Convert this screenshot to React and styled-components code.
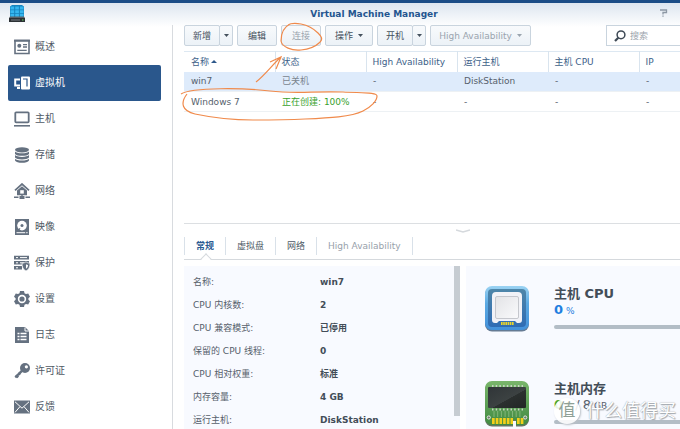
import React from "react";
import styled, { createGlobalStyle, css } from "styled-components";

const Global = createGlobalStyle`
  * { box-sizing: border-box; }
  html, body { margin: 0; height: 100%; overflow: hidden; background: #fff; }
  body, button, input, table {
    font-family: "DejaVu Sans", "Noto Sans CJK SC", sans-serif;
    font-size: 9px;
    line-height: 12px;
    color: #4b5560;
  }
`;

const Window = styled.div`
  position: relative;
  display: flex;
  flex-direction: column;
  height: 100vh;
  overflow: hidden;
  border-top: 3px solid #1b4d87;
  background: linear-gradient(#dde6f0, #fff 24px);
`;

const TitleBar = styled.header`
  display: grid;
  grid-template-columns: 91px 1fr 31px;
  align-items: center;
  flex: 0 0 22px;
  padding-left: 8px;
`;

const Title = styled.h1`
  margin: 0;
  text-align: center;
  font-size: 9px;
  line-height: 20px;
  font-weight: bold;
  color: #24558f;
`;

const HelpButton = styled.button`
  justify-self: end;
  display: flex;
  margin: 0 12px 2px 0;
  padding: 0;
  border: 0;
  background: none;
`;

const Body = styled.div`
  display: flex;
  flex: 1;
  min-height: 0;
`;

const Sidebar = styled.nav`
  display: flex;
  flex-direction: column;
  flex: 0 0 173px;
  padding: 4px 11px 0 8px;
  border-right: 1px solid #d8dbdf;
`;

const NavLink = styled.a`
  display: flex;
  align-items: center;
  gap: 5px;
  flex: 0 0 36px;
  padding-left: 6px;
  border-radius: 2px;
  font-size: 10px;
  text-decoration: none;
  color: ${(p) => (p.$active ? "#fff" : "#4f5a66")};
  background: ${(p) => (p.$active ? "#2a578c" : "transparent")};
`;

const Main = styled.main`
  display: flex;
  flex-direction: column;
  flex: 1;
  min-width: 0;
  padding-left: 11px;
`;

const Toolbar = styled.div`
  display: flex;
  gap: 4px;
  margin-bottom: 5px;
`;

const ButtonGroup = styled.div`
  display: flex;
`;

const Button = styled.button`
  display: flex;
  align-items: center;
  justify-content: center;
  gap: 5px;
  height: 21px;
  width: ${(p) => p.$width}px;
  padding: 0;
  border: 1px solid #c9d4de;
  border-radius: 2px;
  background: linear-gradient(#f8fafc, #ecf2f7);
  color: ${(p) => (p.disabled ? "#9aa4ae" : "#45515d")};
  white-space: nowrap;
  ${(p) => p.$joined && css`margin-left: -1px;`}
`;

const SearchBox = styled.label`
  display: flex;
  align-items: center;
  gap: 4px;
  width: 74px;
  height: 21px;
  margin-left: auto;
  padding-left: 7px;
  border: 1px solid #c9d4de;
  border-right: 0;
  background: #fff;
`;

const SearchInput = styled.input`
  flex: 1;
  min-width: 0;
  padding: 0;
  border: 0;
  outline: 0;
  background: none;
  &::placeholder { color: #9ba4ad; opacity: 1; }
`;

const TableArea = styled.section`
  flex: 0 0 173px;
  border-bottom: 1px solid #dcdfe2;
`;

const Table = styled.table`
  width: 100%;
  table-layout: fixed;
  border-collapse: collapse;
  border-top: 1px solid #dde8f2;
`;

const HeadCell = styled.th`
  width: ${(p) => (p.$last ? "auto" : "91px")};
  height: 20px;
  padding: 0 0 0 ${(p) => (p.$first ? "7px" : "6px")};
  border-left: ${(p) => (p.$first ? "0" : "1px solid #d9e4ee")};
  text-align: left;
  font-weight: normal;
  color: #3d6189;
  white-space: nowrap;
`;

const SortArrow = styled.span`
  display: inline-block;
  margin: 0 0 2px 2px;
  border: 3px solid transparent;
  border-top: 0;
  border-bottom: 3px solid #2d578a;
`;

const Row = styled.tr`
  background: ${(p) => (p.$selected ? "#deebfb" : "#fff")};
  border-bottom: 1px solid #edf1f4;
`;

const Cell = styled.td`
  height: 20px;
  padding: 0 0 0 7px;
  white-space: nowrap;
  color: ${(p) => (p.$tone === "good" ? "#38a12c" : p.$tone === "muted" ? "#7a848e" : "#56616c")};
`;

const Splitter = styled.div`
  display: flex;
  justify-content: center;
  flex: 0 0 13px;
  padding: 5px 0 0 62px;
`;

const SplitterGrip = styled.svg`
  display: block;
`;

const Tabs = styled.div`
  display: flex;
  flex: 0 0 23px;
  border-bottom: 1px solid #d5d9dd;
  margin-bottom: 6px;
`;

const Tab = styled.button`
  position: relative;
  height: 18px;
  padding: 0 11px;
  border: 0;
  border-right: 1px solid #d9e1e9;
  background: none;
  white-space: nowrap;
  font-weight: ${(p) => (p.$active ? "bold" : "normal")};
  color: ${(p) => (p.$active ? "#2b5a92" : p.disabled ? "#98a1ab" : "#4e5a66")};
  &:first-child { border-left: 1px solid #d9e1e9; }
  ${(p) => p.$active && css`
    &::after {
      content: "";
      position: absolute;
      left: calc(50% - 3px);
      bottom: -8px;
      width: 7px;
      height: 7px;
      border: 1px solid #d5d9dd;
      border-right: 0;
      border-bottom: 0;
      background: linear-gradient(135deg, #fff 50%, transparent 50%);
      transform: rotate(45deg);
    }
  `}
`;

const Panels = styled.div`
  display: flex;
  gap: 6px;
  flex: 1;
  min-height: 0;
`;

const InfoPanel = styled.section`
  display: flex;
  justify-content: space-between;
  flex: 0 0 276px;
  overflow: hidden;
  background: #f8faff;
`;

const InfoList = styled.dl`
  display: grid;
  grid-template-columns: 127px 1fr;
  grid-auto-rows: 23px;
  align-items: center;
  margin: 0;
  padding: 4px 0 0 9px;
`;

const InfoLabel = styled.dt`
  color: #56606b;
`;

const InfoValue = styled.dd`
  margin: 0;
  font-weight: bold;
  color: #434d58;
`;

const ScrollThumb = styled.div`
  flex: 0 0 6px;
  height: 150px;
  background: #c6ccd2;
`;

const UsagePanel = styled.section`
  display: flex;
  flex-direction: column;
  gap: 49px;
  flex: 1;
  min-width: 0;
  padding: 20px 0 0 19px;
  overflow: hidden;
  background: #f8faff;
`;

const Usage = styled.article`
  display: flex;
  gap: 25px;
`;

const UsageBody = styled.div`
  flex: 1;
  min-width: 0;
`;

const UsageTitle = styled.h2`
  margin: 0;
  font-size: 13px;
  line-height: 16px;
  font-weight: bold;
  color: #434d58;
`;

const UsageValue = styled.p`
  display: flex;
  align-items: baseline;
  gap: 3px;
  margin: 0;
  font-size: 13px;
  line-height: 16px;
  color: #56606b;
`;

const Amount = styled.strong`
  color: ${(p) => p.$color};
`;

const Unit = styled.span`
  font-size: 9px;
  color: ${(p) => p.$color};
`;

const Meter = styled.div`
  height: 4px;
  margin-top: 6px;
  border-radius: 2px 0 0 2px;
  background: #b3bdc6;
`;

const Watermark = styled.div`
  position: absolute;
  right: 4px;
  bottom: 5px;
  display: flex;
  align-items: center;
  gap: 6px;
  font-size: 18px;
  line-height: 26px;
  color: #fff;
  text-shadow: 0 0 1px #8c939a, 1px 1px 1px #a0a6ac;
`;

const WatermarkSeal = styled.span`
  width: 26px;
  height: 26px;
  border-radius: 50%;
  text-align: center;
  font-size: 17px;
  line-height: 25px;
  color: #8fa096;
  text-shadow: none;
  background: rgba(255, 255, 255, 0.88);
  box-shadow: 1px 1px 2px #b9bfc6;
`;

const Annotation = styled.svg`
  position: absolute;
  left: 0;
  top: -3px;
  pointer-events: none;
`;

const Glyph = styled.svg`
  flex: none;
  display: block;
`;

const G = "#657180";

const icons = {
  overview: (
    <>
      <path d="M1 1.5h14v13H1z" fill="none" stroke={G} strokeWidth="1.6" />
      <path d="M0 .7h16v2H0z" fill={G} />
      <circle cx="5.3" cy="6.8" r="2" fill={G} />
      <path d="M9 5.7h4M9 8h4M3.3 11.3h9.4" stroke={G} strokeWidth="1.3" />
    </>
  ),
  vm: (
    <>
      <path d="M6 4.6H1.2v6H6M3 13h3" fill="none" stroke="#fff" strokeWidth="2" />
      <path d="M8 1.500h7a1 1 0 0 1 1 1v11a1 1 0 0 1-1 1H8a1 1 0 0 1-1-1v-11a1 1 0 0 1 1-1z" fill="#fff" />
      <path d="M9 4h4v7.500" fill="none" stroke="#2a578c" strokeWidth="1.200" />
    </>
  ),
  host: (
    <>
      <rect x="1.3" y="1.3" width="13.4" height="10" rx=".8" fill="none" stroke={G} strokeWidth="1.8" />
      <path d="M0 14.8h16" stroke={G} strokeWidth="1.6" />
    </>
  ),
  storage: (
    <>
      <ellipse cx="8" cy="2.8" rx="7" ry="2.6" fill={G} />
      <path d="M1 4.5c1.5 2.4 12.5 2.4 14 0v2.4c-1.5 2.6-12.5 2.6-14 0zM1 8.1c1.5 2.4 12.5 2.4 14 0v2.4c-1.5 2.6-12.5 2.6-14 0zM1 11.7c1.5 2.4 12.5 2.4 14 0v1.7c-1.5 3.2-12.5 3.2-14 0z" fill={G} />
    </>
  ),
  network: (
    <>
      <path d="M1 7.4 8 1l7 6.4" fill="none" stroke={G} strokeWidth="1.7" />
      <path d="M3 7.6 8 3.3l5 4.3v4.6H3z" fill={G} />
      <path d="M6.2 7.2h3.6v3.4H6.2z" fill="#fff" />
      <path d="M8 11v3M0 14.3h4.5M11.5 14.3H16" stroke={G} strokeWidth="1.4" />
      <path d="M5.5 13h5v3h-5z" fill={G} />
    </>
  ),
  image: (
    <>
      <path d="M1 0h14v16H1z" fill={G} />
      <circle cx="8" cy="6.6" r="4.8" fill="#fff" />
      <circle cx="8" cy="6.6" r="1.5" fill={G} />
      <path d="M4.500 11 6 9.300" stroke={G} strokeWidth="1.2" />
      <path d="M2.5 13.7h8.7M12.2 13.7h1.4" stroke="#fff" strokeWidth="1" />
    </>
  ),
  protect: (
    <>
      <path d="M0 .8h15v3.7H0zM0 6h15v3.6H0zM0 11h8v3.6H0z" fill={G} />
      <path d="M2 2.6h2M6 2.6h7M2 7.8h2M6 7.8h4M2 12.8h2" stroke="#fff" strokeWidth="1" />
      <path d="M12 6.8c1.2 1 2.6 1.3 4 1.4 0 3.8-1 6.5-4 7.8-3-1.3-4-4-4-7.8 1.4-.1 2.8-.4 4-1.4z" fill={G} stroke="#fff" strokeWidth=".7" />
      <path d="M12 9.2v4.5c1.4-.8 2-2 2-3.8-.8-.1-1.4-.3-2-.7z" fill="#fff" />
    </>
  ),
  settings: (
    <>
      <path fill={G} d="M6 0h4l.5 2.2 1.5.9 2.2-.7 1.8 3.3L14.4 7.2v1.6L16 10.3l-1.8 3.3-2.2-.7-1.5.9L10 16H6l-.5-2.2-1.5-.9-2.2.7L0 10.3l1.6-1.5V7.2L0 5.7l1.8-3.3 2.2.7 1.5-.9z" />
      <circle cx="8" cy="8" r="3.4" fill="none" stroke="#fff" strokeWidth="1.6" />
    </>
  ),
  log: (
    <>
      <path d="M1 0h10l4 4v12H1z" fill={G} />
      <path d="M11 .5V4h4" fill="none" stroke="#fff" strokeWidth="1" />
      <path d="M3.500 6.500h2M3.500 9.500h2M3.500 12.500h2M6.500 6.500h6M6.500 9.500h6M6.500 12.500h6" fill="none" stroke="#fff" strokeWidth="1.400" />
    </>
  ),
  license: (
    <>
      <circle cx="11" cy="5" r="5" fill={G} />
      <path d="M8.4 7.3 1.3 14.5M1.8 12l2.4 2.4M4.3 9.7l2 2" stroke={G} strokeWidth="2.4" />
      <circle cx="12.4" cy="3.8" r="1.6" fill="#fff" />
    </>
  ),
  feedback: (
    <>
      <path d="M0 1.5h16v13H0z" fill={G} />
      <path d="m1 2.8 7 6.4 7-6.4M1 13.4l5-5.8M15 13.4l-5-5.8" fill="none" stroke="#fff" strokeWidth="1" />
    </>
  ),
};

const navItems = [
  ["overview", "概述"],
  ["vm", "虚拟机"],
  ["host", "主机"],
  ["storage", "存储"],
  ["network", "网络"],
  ["image", "映像"],
  ["protect", "保护"],
  ["settings", "设置"],
  ["log", "日志"],
  ["license", "许可证"],
  ["feedback", "反馈"],
];

const columns = ["名称", "状态", "High Availability", "运行主机", "主机 CPU", "IP"];

const machines = [
  { cells: ["win7", "已关机", "-", "DiskStation", "-", "-"], tone: "muted", selected: true },
  { cells: ["Windows 7", "正在创建: 100%", "-", "-", "-", "-"], tone: "good" },
];

const details = [
  ["名称:", "win7"],
  ["CPU 内核数:", "2"],
  ["CPU 兼容模式:", "已停用"],
  ["保留的 CPU 线程:", "0"],
  ["CPU 相对权重:", "标准"],
  ["内存容量:", "4 GB"],
  ["运行主机:", "DiskStation"],
];

const Caret = () => (
  <Glyph width="5" height="3" viewBox="0 0 5 3">
    <path d="M0 0h5L2.5 3z" fill="currentColor" />
  </Glyph>
);

const AppLogo = () => (
  <Glyph width="18" height="18" viewBox="0 0 18 18">
    <path d="M2 1.5 4 0h10l2 1.5V12H2z" fill="#1683bd" />
    <path d="M2.5 1.5h3.7v3H2.5zM7.2 1.5h3.7v3H7.2zM11.9 1.5h3.7v3h-3.7zM2.5 5.2h3.7v3H2.5zM7.2 5.2h3.7v3H7.2zM11.9 5.2h3.7v3h-3.7zM2.5 8.9h3.7v3H2.5zM7.2 8.9h3.7v3H7.2zM11.9 8.9h3.7v3h-3.7z" fill="#35b6ef" />
    <path d="M2 11.5h14l1 1.5H1z" fill="#5a6268" />
    <path d="M1 13h16v4H1z" fill="#2c3135" />
    <path d="M3 15h9" stroke="#777f85" />
    <path d="M14 15h1.5" stroke="#5fd35f" />
  </Glyph>
);

const CpuIcon = () => (
  <Glyph width="44" height="46" viewBox="0 0 44 46">
    <defs>
      <linearGradient id="cpuFrame" x2="0" y2="1">
        <stop stopColor="#9bd3f3" />
        <stop offset=".4" stopColor="#5ba9e2" />
        <stop offset="1" stopColor="#4391da" />
      </linearGradient>
      <linearGradient id="cpuWell" x2="0" y2="1">
        <stop stopColor="#4e86a9" />
        <stop offset="1" stopColor="#2f6cb4" />
      </linearGradient>
      <linearGradient id="cpuChip" x2="1" y2="1">
        <stop stopColor="#e2e3e6" />
        <stop offset="1" stopColor="#fafafc" />
      </linearGradient>
    </defs>
    <rect y="1.5" width="44" height="44" rx="7" fill="#657b94" />
    <rect width="44" height="44" rx="7" fill="url(#cpuFrame)" />
    <rect x="3" y="3" width="38" height="38" rx="4" fill="url(#cpuWell)" />
    <path d="M11 6h22a4 4 0 0 1 4 4v24a3 3 0 0 1-3 3h-2l-2-2H14l-2 2h-2a3 3 0 0 1-3-3V10a4 4 0 0 1 4-4z" fill="#f1f2f7" />
    <rect x="10.500" y="10.500" width="23" height="22" rx="1.500" fill="url(#cpuChip)" stroke="#c5c7cd" />
    <path d="M16 37.500h13" stroke="#ecd62b" strokeWidth="3" strokeDasharray="1.600 .600" />
  </Glyph>
);

const MemoryIcon = () => (
  <Glyph width="44" height="46" viewBox="0 0 44 46">
    <defs>
      <linearGradient id="board" x2="0" y2="1">
        <stop stopColor="#79b56b" />
        <stop offset="1" stopColor="#428b42" />
      </linearGradient>
      <linearGradient id="die" x2="1" y2="1">
        <stop stopColor="#303538" />
        <stop offset=".55" stopColor="#3c4242" />
        <stop offset=".56" stopColor="#2b302f" />
        <stop offset="1" stopColor="#222625" />
      </linearGradient>
    </defs>
    <path d="M7 1.500h30a7 7 0 0 1 7 7v30a7 7 0 0 1-7 7h-6V40h-3v5.500H7a7 7 0 0 1-7-7v-30a7 7 0 0 1 7-7z" fill="#647563" />
    <path d="M7 0h30a7 7 0 0 1 7 7v30a7 7 0 0 1-7 7h-6v-5h-3v5H7a7 7 0 0 1-7-7V7a7 7 0 0 1 7-7z" fill="url(#board)" />
    <path d="M7 5h31M7 28.500h31" stroke="#c8d5c3" strokeWidth="2" strokeDasharray="1.500 2.200" />
    <path d="M9 30v6M12.700 30v6M16.400 30v6M20.100 30v6M23.800 30v6M27.500 30v6M31.200 30v6M34.900 30v6" stroke="#82b579" />
    <rect x="3" y="6" width="38" height="21" rx="1" fill="url(#die)" />
    <path d="M7 40h21" stroke="#f3cf1a" strokeWidth="6" strokeDasharray="2.700 1" />
    <path d="M32 40h7" stroke="#f3cf1a" strokeWidth="6" strokeDasharray="2.700 1" />
    <circle cx="3.800" cy="36.500" r="1.600" fill="#6e786e" stroke="#e3ebe1" />
    <circle cx="40.200" cy="36.500" r="1.600" fill="#6e786e" stroke="#e3ebe1" />
  </Glyph>
);

export default function App() {
  return (
    <Window>
      <Global />
      <TitleBar>
        <AppLogo />
        <Title>Virtual Machine Manager</Title>
        <HelpButton aria-label="帮助">
          <Glyph width="9" height="8" viewBox="0 0 9 8">
            <path d="M1 1h6.500v2.500H4v2M4 6.500v1.300" fill="none" stroke="#8d98a5" strokeWidth="1.300" />
          </Glyph>
        </HelpButton>
      </TitleBar>

      <Body>
        <Sidebar>
          {navItems.map(([id, label]) => (
            <NavLink key={id} href={`#${id}`} $active={id === "vm"}>
              <Glyph width="16" height="16" viewBox="0 0 16 16">{icons[id]}</Glyph>
              {label}
            </NavLink>
          ))}
        </Sidebar>

        <Main>
          <Toolbar>
            <ButtonGroup>
              <Button $width={36}>新增</Button>
              <Button $width={14} $joined aria-label="新增选项"><Caret /></Button>
            </ButtonGroup>
            <Button $width={40}>编辑</Button>
            <Button $width={40} disabled>连接</Button>
            <Button $width={48}>操作 <Caret /></Button>
            <ButtonGroup>
              <Button $width={36}>开机</Button>
              <Button $width={14} $joined aria-label="开机选项"><Caret /></Button>
            </ButtonGroup>
            <Button $width={101} disabled>High Availability <Caret /></Button>
            <SearchBox>
              <Glyph width="12" height="12" viewBox="0 0 12 12">
                <circle cx="7" cy="4.800" r="3.900" fill="none" stroke="#3f4a56" strokeWidth="1.500" />
                <path d="m4.300 7.700-3.300 3.300" stroke="#3f4a56" strokeWidth="2.200" />
              </Glyph>
              <SearchInput type="text" placeholder="搜索" aria-label="搜索" />
            </SearchBox>
          </Toolbar>

          <TableArea>
            <Table>
              <thead>
                <tr>
                  {columns.map((name, i) => (
                    <HeadCell key={name} $first={i === 0} $last={i === columns.length - 1}>
                      {name}
                      {i === 0 && <SortArrow />}
                    </HeadCell>
                  ))}
                </tr>
              </thead>
              <tbody>
                {machines.map((m) => (
                  <Row key={m.cells[0]} $selected={m.selected}>
                    {m.cells.map((text, i) => (
                      <Cell key={i} $tone={i === 1 ? m.tone : undefined}>{text}</Cell>
                    ))}
                  </Row>
                ))}
              </tbody>
            </Table>
          </TableArea>

          <Splitter>
            <SplitterGrip width="14" height="5" viewBox="0 0 14 5">
              <path d="m0 1 7 2 7-2" fill="none" stroke="#d5d9dd" strokeWidth="1.500" />
            </SplitterGrip>
          </Splitter>

          <Tabs role="tablist">
            <Tab role="tab" aria-selected="true" $active>常规</Tab>
            <Tab role="tab" aria-selected="false">虚拟盘</Tab>
            <Tab role="tab" aria-selected="false">网络</Tab>
            <Tab role="tab" aria-selected="false" disabled>High Availability</Tab>
          </Tabs>

          <Panels>
            <InfoPanel>
              <InfoList>
                {details.map(([label, value]) => (
                  <React.Fragment key={label}>
                    <InfoLabel>{label}</InfoLabel>
                    <InfoValue>{value}</InfoValue>
                  </React.Fragment>
                ))}
              </InfoList>
              <ScrollThumb />
            </InfoPanel>

            <UsagePanel>
              <Usage>
                <CpuIcon />
                <UsageBody>
                  <UsageTitle>主机 CPU</UsageTitle>
                  <UsageValue>
                    <Amount $color="#1f7fe0">0</Amount>
                    <Unit $color="#1f7fe0">%</Unit>
                  </UsageValue>
                  <Meter />
                </UsageBody>
              </Usage>
              <Usage>
                <MemoryIcon />
                <UsageBody>
                  <UsageTitle>主机内存</UsageTitle>
                  <UsageValue>
                    <Amount $color="#47a832">0</Amount>
                    <Unit $color="#47a832">B</Unit>
                    <span>/</span>
                    <span>8</span>
                    <Unit>GB</Unit>
                  </UsageValue>
                  <Meter />
                </UsageBody>
              </Usage>
            </UsagePanel>
          </Panels>
        </Main>
      </Body>

      <Annotation width="400" height="130" viewBox="0 0 400 130" fill="none" stroke="#f08a4b" strokeWidth="1.200">
        <path d="M290 24c-6 3-9 10-9 17 1 6 11 10 20 9 9-1 14-3 18-7 5-4 2-7-1-10-5-5-12-8-17-9-6-1-10-1-13 1" />
        <path d="M256 82c10-8 16-17 25-25M270 62l11-5-5 12" />
        <path d="M187 94c-7 9-5 17 8 20 19 4 37 6 58 6 20 0 32 0 52-1 24-1 46-2 58-8 8-4 14-10 14-15 0-4-14-3-34-4-30-1-47 2-73-1-24-3-78-4-89 3" />
      </Annotation>

      <Watermark>
        <WatermarkSeal>值</WatermarkSeal>
        什么值得买
      </Watermark>
    </Window>
  );
}
